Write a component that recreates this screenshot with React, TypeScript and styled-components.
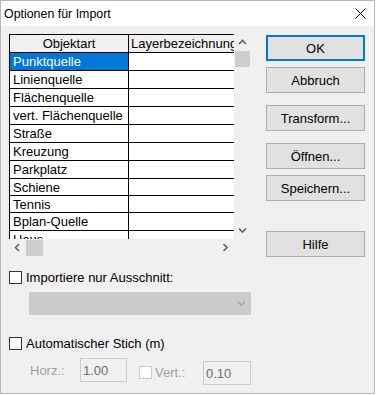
import React from "react";
import styled, { createGlobalStyle } from "styled-components";

const Global = createGlobalStyle`
  html, body { margin: 0; padding: 0; background: #ffffff; }
  body { font-family: "Liberation Sans", Arial, sans-serif; }
  * { box-sizing: border-box; }
`;

const Window = styled.div`
  width: 375px;
  height: 394px;
  border: 1px solid #b8b8b8;
  background: #f0f0f0;
  display: flex;
  flex-direction: column;
  font-family: "Liberation Sans", Arial, sans-serif;
  font-size: 13px;
  color: #000;
`;

const TitleBar = styled.div`
  height: 25px;
  flex-shrink: 0;
  background: #ffffff;
  display: flex;
  align-items: center;
  justify-content: space-between;
  padding: 0 8px 0 3px;
`;

const Title = styled.span`
  font-size: 12.4px;
  color: #000;
`;

const CloseIcon = styled.svg`
  width: 11px;
  height: 11px;
  display: block;
`;

const Body = styled.div`
  flex: 1;
  display: flex;
  flex-direction: column;
  padding: 8px 0 0 8px;
`;

const Main = styled.div`
  display: flex;
  gap: 15px;
  align-items: flex-start;
`;

const LeftPanel = styled.div`
  width: 242px;
  display: flex;
  flex-direction: column;
`;

const GridFrame = styled.div`
  display: grid;
  grid-template-columns: 225px 17px;
  grid-template-rows: 205px 17px;
`;

const Viewport = styled.div`
  overflow: hidden;
  border-top: 1px solid #000;
  border-left: 1px solid #000;
  background: #f0f0f0;
`;

const Row = styled.div<{ $h: number }>`
  display: flex;
  height: ${(p) => p.$h + 1}px;
  border-bottom: 1px solid #000;
`;

const Cell = styled.div<{ $w: number; $selected?: boolean; $header?: boolean }>`
  width: ${(p) => p.$w}px;
  flex-shrink: 0;
  display: flex;
  align-items: center;
  justify-content: ${(p) => (p.$header ? "center" : "flex-start")};
  padding-left: ${(p) => (p.$header ? 0 : 3)}px;
  border-right: 1px solid #000;
  background: ${(p) => (p.$selected ? "#0078d7" : p.$header ? "#f0f0f0" : "#ffffff")};
  color: ${(p) => (p.$selected ? "#ffffff" : "#000")};
  white-space: nowrap;
  overflow: hidden;
  line-height: 17px;
`;

const HeaderWide = styled(Cell)`
  justify-content: flex-start;
  padding-left: 2px;
`;

const VScroll = styled.div`
  display: flex;
  flex-direction: column;
  background: #f0f0f0;
`;

const HScroll = styled.div`
  display: flex;
  background: #f0f0f0;
`;

const ArrowBtn = styled.div`
  width: 17px;
  height: 17px;
  flex-shrink: 0;
  display: flex;
  align-items: center;
  justify-content: center;
`;

const VThumb = styled.div`
  width: 15px;
  height: 16px;
  margin-left: 1px;
  background: #cdcdcd;
`;

const HThumb = styled.div`
  width: 17px;
  height: 16px;
  margin-top: 1px;
  background: #cdcdcd;
`;

const Spacer = styled.div`
  flex: 1;
`;

const Corner = styled.div`
  background: #f0f0f0;
`;

const ButtonCol = styled.div`
  display: flex;
  flex-direction: column;
  padding-top: 1px;
`;

const Button = styled.div<{ $gap: number; $default?: boolean }>`
  width: 99px;
  height: 26px;
  margin-top: ${(p) => p.$gap}px;
  background: #e1e1e1;
  border: ${(p) => (p.$default ? "2px solid #0078d7" : "1px solid #adadad")};
  display: flex;
  align-items: center;
  justify-content: center;
  font-size: 13px;
  color: #000;
`;

const CheckRow = styled.div<{ $mt: number }>`
  display: flex;
  align-items: center;
  gap: 4px;
  margin-top: ${(p) => p.$mt}px;
  height: 13px;
`;

const Box = styled.div<{ $disabled?: boolean }>`
  width: 13px;
  height: 13px;
  flex-shrink: 0;
  border: 1px solid ${(p) => (p.$disabled ? "#cccccc" : "#333333")};
  background: #ffffff;
`;

const Label = styled.span<{ $disabled?: boolean }>`
  color: ${(p) => (p.$disabled ? "#a0a0a0" : "#000")};
  white-space: nowrap;
`;

const Select = styled.div`
  margin: 8px 0 0 20px;
  width: 222px;
  height: 23px;
  background: #cccccc;
  border: 1px solid #cccccc;
  display: flex;
  align-items: center;
  justify-content: flex-end;
  padding-right: 4px;
`;

const FieldRow = styled.div`
  display: flex;
  align-items: flex-start;
  margin-top: 8px;
  padding-left: 21px;
  height: 26px;
`;

const FieldLabel = styled.span<{ $w: number; $mt: number }>`
  width: ${(p) => p.$w}px;
  margin-top: ${(p) => p.$mt}px;
  color: #a0a0a0;
  white-space: nowrap;
`;

const Input = styled.div<{ $w: number; $mt: number }>`
  width: ${(p) => p.$w}px;
  height: 24px;
  margin-top: ${(p) => p.$mt}px;
  border: 1px solid #cccccc;
  background: #f0f0f0;
  color: #6d6d6d;
  display: flex;
  align-items: center;
  padding-left: 2px;
`;

const SmallBox = styled(Box)<{ $ml: number; $mt: number }>`
  margin-left: ${(p) => p.$ml}px;
  margin-top: ${(p) => p.$mt}px;
  margin-right: 3px;
`;

const Chevron = ({ dir, color = "#606060" }: { dir: "up" | "down" | "left" | "right"; color?: string }) => {
  const pts: Record<string, string> = {
    up: "1,5 4.5,1.5 8,5",
    down: "1,1.5 4.5,5 8,1.5",
    left: "5,1 1.5,4.5 5,8",
    right: "1.5,1 5,4.5 1.5,8",
  };
  const vertical = dir === "up" || dir === "down";
  return (
    <svg width={vertical ? 9 : 7} height={vertical ? 7 : 9} viewBox={vertical ? "0 0 9 7" : "0 0 7 9"}>
      <polyline points={pts[dir]} fill="none" stroke={color} strokeWidth="1.6" />
    </svg>
  );
};

const rows = [
  { name: "Punktquelle", h: 17, selected: true },
  { name: "Linienquelle", h: 17 },
  { name: "Flächenquelle", h: 17 },
  { name: "vert. Flächenquelle", h: 17 },
  { name: "Straße", h: 17 },
  { name: "Kreuzung", h: 17 },
  { name: "Parkplatz", h: 17 },
  { name: "Schiene", h: 16 },
  { name: "Tennis", h: 16 },
  { name: "Bplan-Quelle", h: 17 },
  { name: "Haus", h: 17 },
];

export default function App() {
  return (
    <>
      <Global />
      <Window>
        <TitleBar>
          <Title>Optionen für Import</Title>
          <CloseIcon viewBox="0 0 11 11">
            <path d="M0.5 0.5 L10.5 10.5 M10.5 0.5 L0.5 10.5" stroke="#000" strokeWidth="1" fill="none" />
          </CloseIcon>
        </TitleBar>
        <Body>
          <Main>
            <LeftPanel>
              <GridFrame>
                <Viewport>
                  <Row $h={17}>
                    <Cell $w={119} $header>Objektart</Cell>
                    <HeaderWide $w={130} $header>Layerbezeichnung</HeaderWide>
                  </Row>
                  {rows.map((r) => (
                    <Row key={r.name} $h={r.h}>
                      <Cell $w={119} $selected={r.selected}>{r.name}</Cell>
                      <Cell $w={130} />
                    </Row>
                  ))}
                </Viewport>
                <VScroll>
                  <ArrowBtn><Chevron dir="up" /></ArrowBtn>
                  <VThumb />
                  <Spacer />
                  <ArrowBtn><Chevron dir="down" /></ArrowBtn>
                </VScroll>
                <HScroll>
                  <ArrowBtn><Chevron dir="left" /></ArrowBtn>
                  <HThumb />
                  <Spacer />
                  <ArrowBtn><Chevron dir="right" /></ArrowBtn>
                </HScroll>
                <Corner />
              </GridFrame>
              <CheckRow $mt={15}>
                <Box />
                <Label>Importiere nur Ausschnitt:</Label>
              </CheckRow>
              <Select>
                <Chevron dir="down" color="#a8a8a8" />
              </Select>
              <CheckRow $mt={22}>
                <Box />
                <Label>Automatischer Stich (m)</Label>
              </CheckRow>
              <FieldRow>
                <FieldLabel $w={50} $mt={5}>Horz.:</FieldLabel>
                <Input $w={47} $mt={0}>1.00</Input>
                <SmallBox $disabled $ml={12} $mt={8} />
                <FieldLabel $w={48} $mt={7}>Vert.:</FieldLabel>
                <Input $w={48} $mt={3}>0.10</Input>
              </FieldRow>
            </LeftPanel>
            <ButtonCol>
              <Button $gap={0} $default>OK</Button>
              <Button $gap={6}>Abbruch</Button>
              <Button $gap={12}>Transform...</Button>
              <Button $gap={12}>Öffnen...</Button>
              <Button $gap={6}>Speichern...</Button>
              <Button $gap={30}>Hilfe</Button>
            </ButtonCol>
          </Main>
        </Body>
      </Window>
    </>
  );
}
